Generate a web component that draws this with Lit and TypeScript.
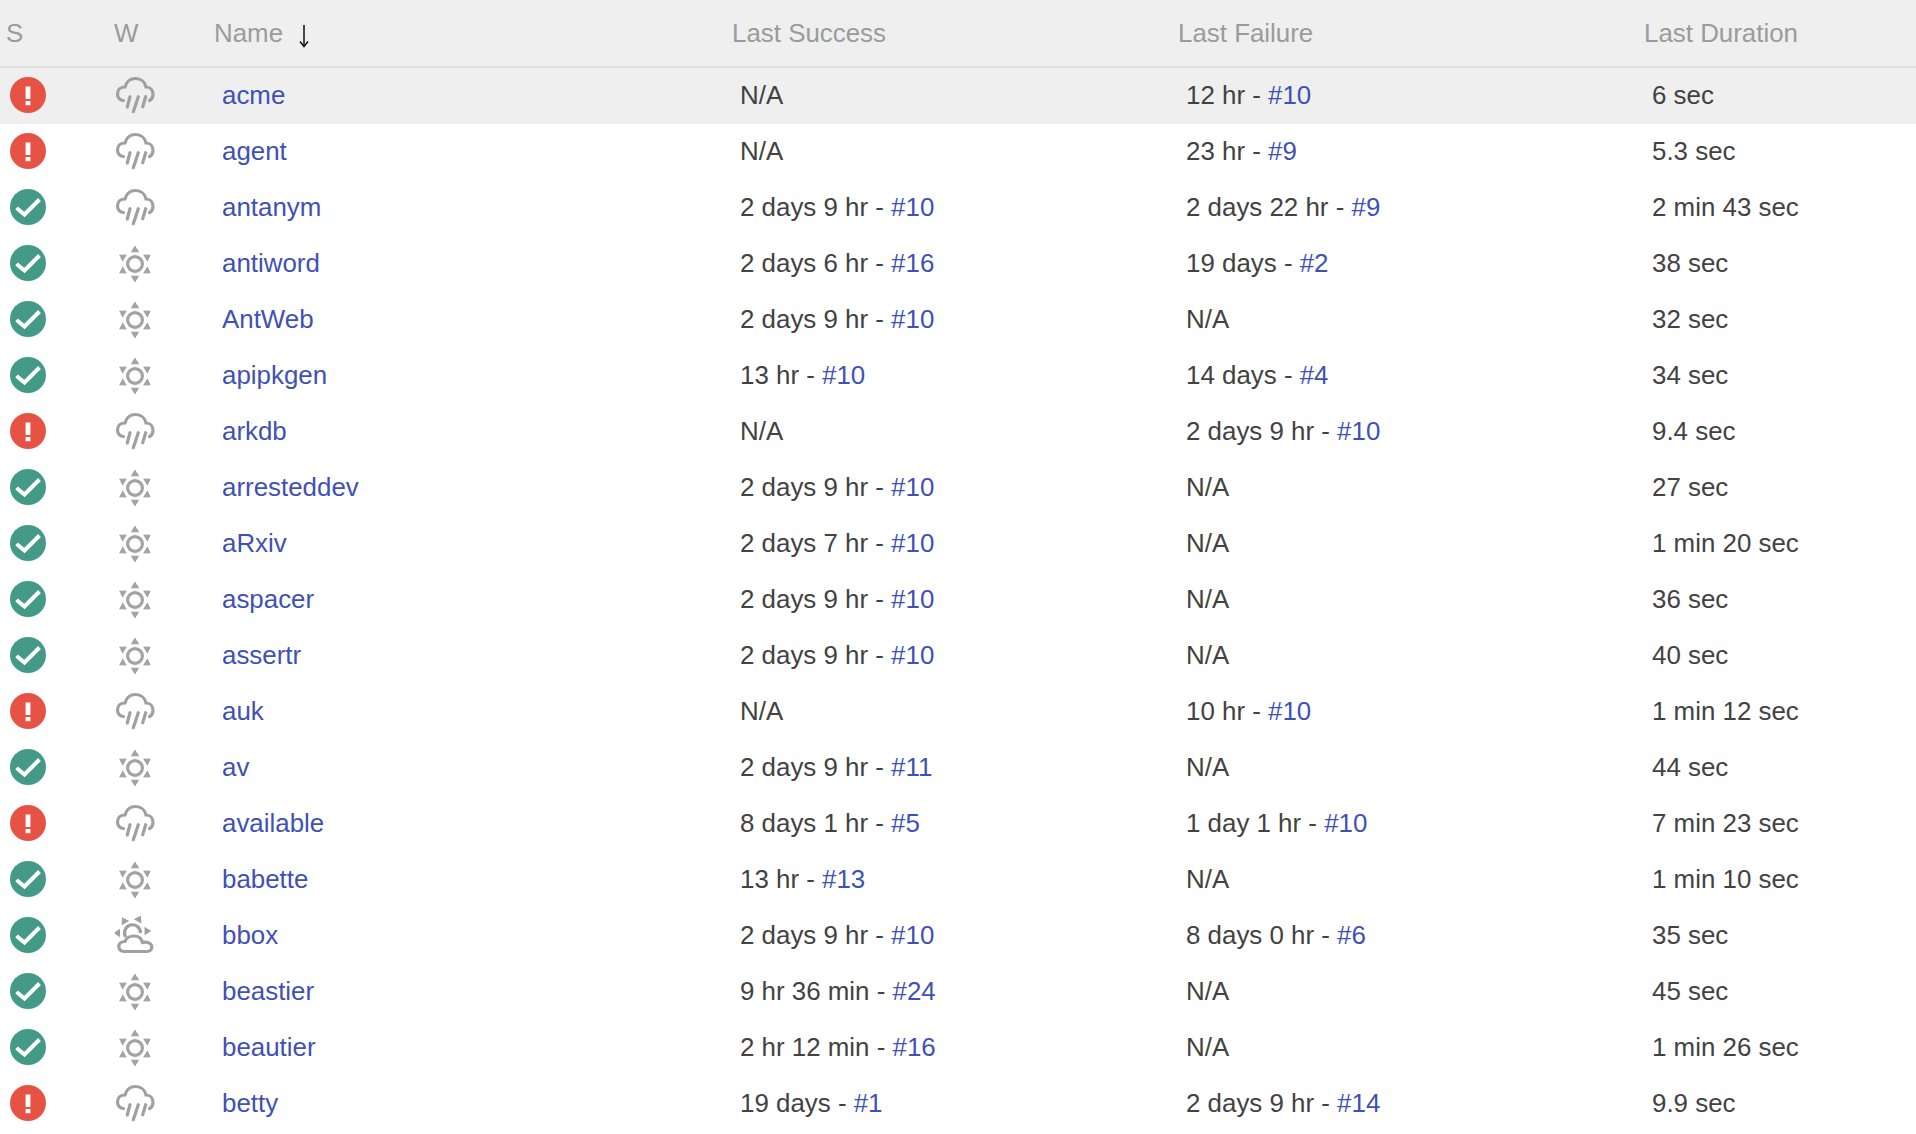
import { LitElement, html, css, svg } from "lit";
import { customElement } from "lit/decorators.js";

type Run = string; // "text|#n" or "N/A"
type Row = [string, "ok" | "fail", "rain" | "sun" | "cloud", Run, Run, string];

const rows: Row[] = [
  ["acme", "fail", "rain", "N/A", "12 hr|#10", "6 sec"],
  ["agent", "fail", "rain", "N/A", "23 hr|#9", "5.3 sec"],
  ["antanym", "ok", "rain", "2 days 9 hr|#10", "2 days 22 hr|#9", "2 min 43 sec"],
  ["antiword", "ok", "sun", "2 days 6 hr|#16", "19 days|#2", "38 sec"],
  ["AntWeb", "ok", "sun", "2 days 9 hr|#10", "N/A", "32 sec"],
  ["apipkgen", "ok", "sun", "13 hr|#10", "14 days|#4", "34 sec"],
  ["arkdb", "fail", "rain", "N/A", "2 days 9 hr|#10", "9.4 sec"],
  ["arresteddev", "ok", "sun", "2 days 9 hr|#10", "N/A", "27 sec"],
  ["aRxiv", "ok", "sun", "2 days 7 hr|#10", "N/A", "1 min 20 sec"],
  ["aspacer", "ok", "sun", "2 days 9 hr|#10", "N/A", "36 sec"],
  ["assertr", "ok", "sun", "2 days 9 hr|#10", "N/A", "40 sec"],
  ["auk", "fail", "rain", "N/A", "10 hr|#10", "1 min 12 sec"],
  ["av", "ok", "sun", "2 days 9 hr|#11", "N/A", "44 sec"],
  ["available", "fail", "rain", "8 days 1 hr|#5", "1 day 1 hr|#10", "7 min 23 sec"],
  ["babette", "ok", "sun", "13 hr|#13", "N/A", "1 min 10 sec"],
  ["bbox", "ok", "cloud", "2 days 9 hr|#10", "8 days 0 hr|#6", "35 sec"],
  ["beastier", "ok", "sun", "9 hr 36 min|#24", "N/A", "45 sec"],
  ["beautier", "ok", "sun", "2 hr 12 min|#16", "N/A", "1 min 26 sec"],
  ["betty", "fail", "rain", "19 days|#1", "2 days 9 hr|#14", "9.9 sec"],
];

const statusIcon = (s: Row[1]) =>
  s === "fail"
    ? html`<svg class="status" viewBox="0 0 36 36"><circle cx="18" cy="18" r="18" fill="#e65345"/><rect x="15.6" y="9.5" width="4.8" height="12.5" fill="#fff"/><rect x="15.6" y="24" width="4.8" height="4.2" fill="#fff"/></svg>`
    : html`<svg class="status" viewBox="0 0 36 36"><circle cx="18" cy="18" r="18" fill="#429a87"/><path d="M6.5 19 L14.5 25.5 L29.5 10.5" fill="none" stroke="#fff" stroke-width="4"/></svg>`;

const tri = (x: number, y: number, a: number, k = 1) =>
  svg`<path transform="translate(${x} ${y}) rotate(${a}) scale(${k})" d="M0 -3.6 L4.3 3 L-4.3 3 Z" fill="#a3a3a3"/>`;

const weatherIcon = (w: Row[2]) => {
  if (w === "rain")
    return html`<svg class="weather" viewBox="0 0 40 40" fill="none" stroke="#a0a0a0" stroke-width="3.2" stroke-linecap="round">
      <path d="M8.5 24.5 C5 24.5 2.5 21.5 2.5 18 C2.5 13.5 6 11 10 11 C11.5 5.5 15.5 2.5 20.5 2.5 C26 2.5 30 6 31 11 C35 11 38 14 38 18.5 C38 21.5 36.5 23.5 34.5 24.5"/>
      <path d="M15 20.7 L12.3 31"/><path d="M23.3 20.7 L18.3 35.7"/><path d="M30.7 20.7 L27.7 30.7"/>
    </svg>`;
  if (w === "sun")
    return html`<svg class="weather" viewBox="0 0 40 40">
      <circle cx="20" cy="20" r="7.4" fill="none" stroke="#a3a3a3" stroke-width="3.2"/>
      ${tri(20, 5.2, 0)}${tri(32.8, 12.6, 60)}${tri(32.8, 27.4, 120)}${tri(20, 34.8, 180)}${tri(7.2, 27.4, 240)}${tri(7.2, 12.6, 300)}
    </svg>`;
  return html`<svg class="weather" viewBox="0 0 40 40" fill="none" stroke="#a0a0a0" stroke-width="3.2">
    <path d="M10.7 21 A8 8 0 1 1 25.5 17"/>
    <path d="M9 35.5 C5.5 35.5 3.8 33 3.8 30.5 C3.8 27.5 6.5 25.5 10 25.5 C11 22 15 20 19 20 C23.5 20 26.5 22.5 27.5 26.5 C32 25.5 36.8 27 36.8 31 C36.8 33.5 35 35.5 32 35.5 Z"/>
    ${tri(9, 4.7, -30, 0.6)}${tri(24, 3, 30, 0.6)}${tri(2.3, 17, -90, 0.6)}${tri(32.3, 15, 90, 0.6)}
  </svg>`;
};

const run = (r: Run) => {
  const [t, n] = r.split("|");
  return n ? html`${t} - <a>${n}</a>` : t;
};

@customElement("app-root")
export class AppRoot extends LitElement {
  static styles = css`
    :host {
      display: block;
      height: 1134px;
      overflow: hidden;
      background: #fff;
      font-family: "Liberation Sans", Arial, sans-serif;
      font-size: 25.9px;
      color: #424242;
    }
    .row {
      display: grid;
      grid-template-columns: 107px 100px 518px 446px 466px 1fr;
      align-items: center;
      box-sizing: border-box;
      height: 56px;
      padding-bottom: 2px;
      white-space: nowrap;
    }
    .head {
      height: 68px;
      padding-bottom: 0;
      background: #efefef;
      border-bottom: 2px solid #e0e0e0;
      color: #9b9b9b;
    }
    .head > div { padding-left: 7px; }
    .head > div:first-child { padding-left: 6px; }
    .row.first { background: #efefef; }
    .cell { padding-left: 15px; }
    .icon { display: flex; align-items: center; }
    .s { padding-left: 10px; }
    .w { padding-left: 8px; padding-top: 2px; }
    .name { display: flex; align-items: center; }
    .arrow { width: 14px; height: 24px; margin-left: 14px; margin-top: 6px; }
    .status { width: 36px; height: 36px; display: block; }
    .weather { width: 40px; height: 40px; display: block; }
    a { color: #3f51b5; }
  `;

  render() {
    return html`
      <div class="row head">
        <div>S</div>
        <div>W</div>
        <div class="name">Name
          <svg class="arrow" viewBox="0 0 14 24" fill="none" stroke="#111" stroke-width="1.5"><path d="M7 1 V22"/><path d="M3 17.5 L7 22.5 L11 17.5"/></svg>
        </div>
        <div>Last Success</div>
        <div>Last Failure</div>
        <div>Last Duration</div>
      </div>
      ${rows.map(
        (r, i) => html`<div class="row ${i === 0 ? "first" : ""}">
          <div class="icon s">${statusIcon(r[1])}</div>
          <div class="icon w">${weatherIcon(r[2])}</div>
          <div class="cell"><a>${r[0]}</a></div>
          <div class="cell">${run(r[3])}</div>
          <div class="cell">${run(r[4])}</div>
          <div class="cell">${r[5]}</div>
        </div>`
      )}
    `;
  }
}
